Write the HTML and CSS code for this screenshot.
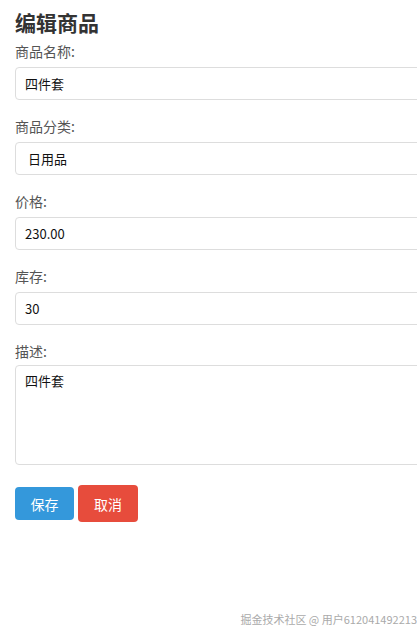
FILE: index.html
```html
<!DOCTYPE html>
<html lang="zh-CN">
<head>
<meta charset="utf-8">
<title>编辑商品</title>
<link rel="stylesheet" href="styles.css">
</head>
<body>
<div class="page">
  <h2 class="title">编辑商品</h2>
  <form class="form">
    <div class="group">
      <label class="label">商品名称:</label>
      <div class="field">四件套</div>
    </div>
    <div class="group">
      <label class="label">商品分类:</label>
      <div class="field field-select">日用品</div>
    </div>
    <div class="group">
      <label class="label">价格:</label>
      <div class="field">230.00</div>
    </div>
    <div class="group">
      <label class="label">库存:</label>
      <div class="field">30</div>
    </div>
    <div class="group">
      <label class="label label-desc">描述:</label>
      <div class="field field-area">四件套</div>
    </div>
    <div class="actions">
      <button type="button" class="btn btn-save">保存</button>
      <button type="button" class="btn btn-cancel">取消</button>
    </div>
  </form>
</div>
<div class="watermark">掘金技术社区 @ 用户612041492213</div>
</body>
</html>
```

FILE: styles.css
```css
html, body {
  margin: 0;
  padding: 0;
  background: #fff;
  overflow: hidden;
  width: 417px;
  height: 639px;
}
body {
  font-family: "Noto Sans CJK SC", "Noto Sans", sans-serif;
  position: relative;
}
.page {
  box-sizing: border-box;
  padding: 10px 0 0 15px;
  width: 417px;
  overflow: hidden;
}
.title {
  margin: 0 0 7px;
  font-size: 21px;
  line-height: 24px;
  font-weight: bold;
  color: #333;
}
.form {
  display: flex;
  flex-direction: column;
  width: 440px;
}
.group {
  display: flex;
  flex-direction: column;
  margin-bottom: 16px;
}
.label {
  font-size: 14px;
  line-height: 20px;
  color: #555;
  margin-bottom: 6px;
}
.label-desc {
  margin-bottom: 4px;
}
.field {
  box-sizing: border-box;
  height: 33px;
  border: 1px solid #ddd;
  border-radius: 4px;
  padding: 0 9px;
  font-size: 13px;
  line-height: 31px;
  color: #111;
}
.field-select {
  padding-left: 12px;
}
.field-area {
  height: 100px;
  padding-top: 3px;
  line-height: 24px;
}
.actions {
  display: flex;
  align-items: center;
  gap: 4px;
  margin-top: 4px;
}
.btn {
  border: none;
  border-radius: 4px;
  color: #fff;
  font-family: inherit;
  font-size: 14px;
  width: 59px;
  height: 33px;
  padding: 0;
  cursor: pointer;
}
.btn-save {
  background: #3498db;
}
.btn-cancel {
  background: #e74c3c;
  width: 60px;
  height: 37px;
}
.watermark {
  position: absolute;
  right: 0;
  top: 611px;
  font-size: 11px;
  line-height: 16px;
  color: #aaa;
}
```
